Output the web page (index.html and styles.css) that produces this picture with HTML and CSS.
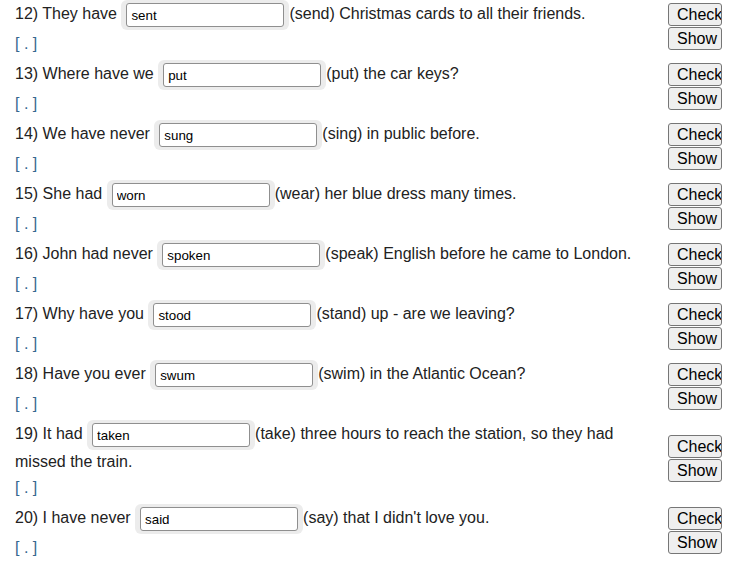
FILE: index.html
```html
<!DOCTYPE html>
<html lang="en">
<head>
<meta charset="utf-8">
<title>Past participles</title>
<link rel="stylesheet" href="styles.css">
</head>
<body>
<div class="exercise">
  <div class="item">
    <div class="qbody">
      <p class="q">12) They have <span class="gap"><input class="ans" type="text" value="sent"></span>(send) Christmas cards to all their friends.</p>
      <div class="fb">[ . ]</div>
    </div>
    <div class="btns"><button class="btn">Check</button><button class="btn">Show</button></div>
  </div>
  <div class="item">
    <div class="qbody">
      <p class="q">13) Where have we <span class="gap"><input class="ans" type="text" value="put"></span>(put) the car keys?</p>
      <div class="fb">[ . ]</div>
    </div>
    <div class="btns"><button class="btn">Check</button><button class="btn">Show</button></div>
  </div>
  <div class="item">
    <div class="qbody">
      <p class="q">14) We have never <span class="gap"><input class="ans" type="text" value="sung"></span>(sing) in public before.</p>
      <div class="fb">[ . ]</div>
    </div>
    <div class="btns"><button class="btn">Check</button><button class="btn">Show</button></div>
  </div>
  <div class="item">
    <div class="qbody">
      <p class="q">15) She had <span class="gap"><input class="ans" type="text" value="worn"></span>(wear) her blue dress many times.</p>
      <div class="fb">[ . ]</div>
    </div>
    <div class="btns"><button class="btn">Check</button><button class="btn">Show</button></div>
  </div>
  <div class="item">
    <div class="qbody">
      <p class="q">16) John had never <span class="gap"><input class="ans" type="text" value="spoken"></span>(speak) English before he came to London.</p>
      <div class="fb">[ . ]</div>
    </div>
    <div class="btns"><button class="btn">Check</button><button class="btn">Show</button></div>
  </div>
  <div class="item">
    <div class="qbody">
      <p class="q">17) Why have you <span class="gap"><input class="ans" type="text" value="stood"></span>(stand) up - are we leaving?</p>
      <div class="fb">[ . ]</div>
    </div>
    <div class="btns"><button class="btn">Check</button><button class="btn">Show</button></div>
  </div>
  <div class="item">
    <div class="qbody">
      <p class="q">18) Have you ever <span class="gap"><input class="ans" type="text" value="swum"></span>(swim) in the Atlantic Ocean?</p>
      <div class="fb">[ . ]</div>
    </div>
    <div class="btns"><button class="btn">Check</button><button class="btn">Show</button></div>
  </div>
  <div class="item">
    <div class="qbody">
      <p class="q">19) It had <span class="gap"><input class="ans" type="text" value="taken"></span>(take) three hours to reach the station, so they had missed the train.</p>
      <div class="fb">[ . ]</div>
    </div>
    <div class="btns"><button class="btn">Check</button><button class="btn">Show</button></div>
  </div>
  <div class="item">
    <div class="qbody">
      <p class="q">20) I have never <span class="gap"><input class="ans" type="text" value="said"></span>(say) that I didn't love you.</p>
      <div class="fb">[ . ]</div>
    </div>
    <div class="btns"><button class="btn">Check</button><button class="btn">Show</button></div>
  </div>
  <div class="item">
    <div class="qbody">
      <p class="q">21) By the time we came, the film had <span class="gap"><input class="ans" type="text" value=""></span>(begin).</p>
      <div class="fb">[ . ]</div>
    </div>
    <div class="btns"><button class="btn">Check</button><button class="btn">Show</button></div>
  </div>
</div>
</body>
</html>
```
FILE: styles.css
```css
html, body {
  margin: 0;
  padding: 0;
  background: #ffffff;
}

body {
  font-family: "Liberation Sans", Arial, sans-serif;
  font-size: 16px;
  color: #222222;
}

.exercise {
  padding-top: 0;
}

.item {
  display: flex;
  align-items: center;
  padding-left: 15px;
  padding-right: 7px;
  margin-bottom: 8px;
}

.qbody {
  flex: 1;
  min-width: 0;
}

.q {
  margin: 0;
  line-height: 24px;
}

.gap {
  display: inline-block;
  vertical-align: middle;
  box-sizing: border-box;
  height: 30px;
  padding: 3px 5px;
  background: #ececec;
  border-radius: 6px;
}

.ans {
  display: block;
  box-sizing: border-box;
  width: 158px;
  height: 24px;
  margin: 0;
  padding: 1px 4px;
  border: 1px solid #8f8f8f;
  border-radius: 3px;
  background: #ffffff;
  font-family: "Liberation Sans", Arial, sans-serif;
  font-size: 13.333px;
  color: #000000;
}

.fb {
  margin-top: 6px;
  line-height: 16px;
  color: #35688f;
}

.btns {
  display: flex;
  flex-direction: column;
  gap: 1px;
  width: 54px;
  margin-left: 8px;
}

.btn {
  box-sizing: border-box;
  width: 54px;
  height: 23px;
  margin: 0;
  padding: 0 0 0 8px;
  overflow: hidden;
  white-space: nowrap;
  text-align: left;
  font-family: "Liberation Sans", Arial, sans-serif;
  font-size: 16px;
  line-height: 21px;
  color: #000000;
  background: #efefef;
  border: 1px solid #767676;
  border-radius: 3px;
}
```
